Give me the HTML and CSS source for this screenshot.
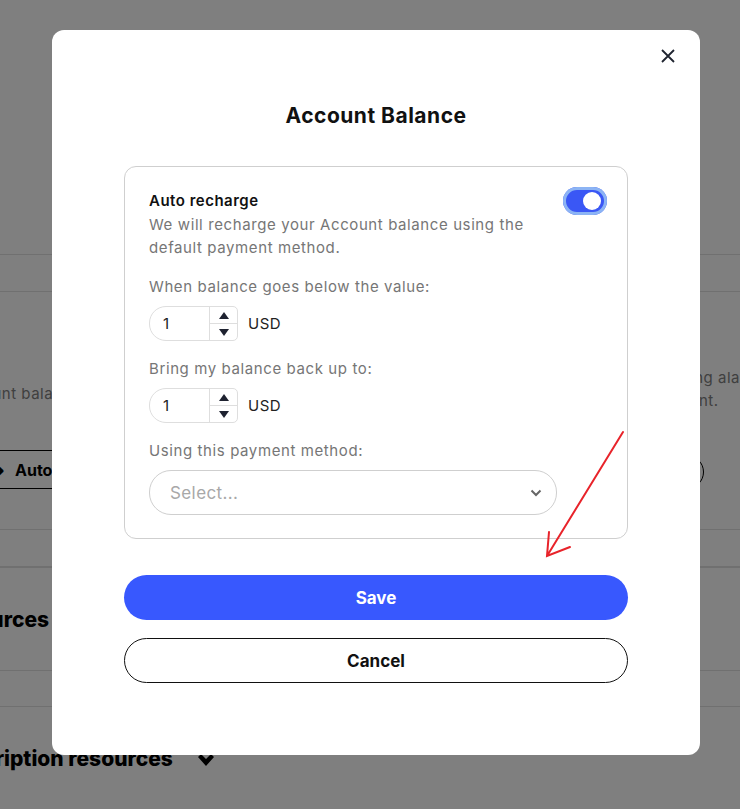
FILE: index.html
```html
<!DOCTYPE html>
<html lang="en">
<head>
    <meta charset="UTF-8">
    <meta name="viewport" content="width=device-width, initial-scale=1.0">
    <title>Account Balance</title>
    <link rel="stylesheet" href="styles.css">
</head>
<body>
    <!-- page behind the dialog -->
    <div class="page">
        <div class="row row-top"></div>
        <div class="row row-head"></div>
        <div class="about">
            <p class="about-left">Account balance</p>
            <p class="about-right"><span class="line">setting alarms</span><span class="line second">account.</span></p>
        </div>
        <div class="actions">
            <span class="auto-btn"><span class="auto-icon">&#10140;</span>Auto recharge</span>
            <span class="round-btn">Add funds</span>
        </div>
        <div class="row row-mid"></div>
        <h2 class="res-title">Resources</h2>
        <div class="row row-low"></div>
        <h2 class="res-title sub">Subscription resources
            <svg class="caret" width="18" height="14" viewBox="0 0 18 14"><path d="M1 4L4 1L9 6L14 1L17 4L9 13Z" fill="#000"/></svg>
        </h2>
    </div>

    <div class="overlay">
        <div class="modal">
            <button class="close" aria-label="Close">
                <svg width="16" height="16" viewBox="0 0 16 16"><path d="M2 2L14 14M14 2L2 14" stroke="#1f2430" stroke-width="1.8" fill="none"/></svg>
            </button>
            <h1 class="modal-title">Account Balance</h1>

            <div class="card">
                <div class="card-head">
                    <div class="head-text">
                        <div class="head-title">Auto recharge</div>
                        <p class="muted">We will recharge your Account balance using the default payment method.</p>
                    </div>
                    <span class="toggle"><span class="knob"></span></span>
                </div>

                <label class="field-label">When balance goes below the value:</label>
                <div class="amount">
                    <div class="num">
                        <span class="num-value">1</span>
                        <span class="spin">
                            <span class="spin-up"><svg width="10" height="7" viewBox="0 0 10 7"><path d="M5 0L10 7H0z" fill="#1e2230"/></svg></span>
                            <span class="spin-down"><svg width="10" height="7" viewBox="0 0 10 7"><path d="M0 0H10L5 7z" fill="#1e2230"/></svg></span>
                        </span>
                    </div>
                    <span class="currency">USD</span>
                </div>

                <label class="field-label">Bring my balance back up to:</label>
                <div class="amount">
                    <div class="num">
                        <span class="num-value">1</span>
                        <span class="spin">
                            <span class="spin-up"><svg width="10" height="7" viewBox="0 0 10 7"><path d="M5 0L10 7H0z" fill="#1e2230"/></svg></span>
                            <span class="spin-down"><svg width="10" height="7" viewBox="0 0 10 7"><path d="M0 0H10L5 7z" fill="#1e2230"/></svg></span>
                        </span>
                    </div>
                    <span class="currency">USD</span>
                </div>

                <label class="field-label">Using this payment method:</label>
                <div class="select">
                    <span class="placeholder">Select...</span>
                    <svg width="12" height="8" viewBox="0 0 12 8"><path d="M1.5 1.5L6 6L10.5 1.5" stroke="#666" stroke-width="2" fill="none"/></svg>
                </div>
            </div>

            <button class="btn btn-save">Save</button>
            <button class="btn btn-cancel">Cancel</button>
        </div>

        <!-- red annotation arrow -->
        <svg class="arrow" width="740" height="809" viewBox="0 0 740 809">
            <path d="M623 432L547 556M549 532L547 556L570 547" stroke="#e8232a" stroke-width="2" fill="none" stroke-linecap="round"/>
        </svg>
    </div>
</body>
</html>
```

FILE: styles.css
```css
* {
    box-sizing: border-box;
}
body {
    margin: 0;
    font-family: Inter, "Open Sans", Arial, sans-serif;
    background: #fff;
    color: #111;
    overflow: hidden;
}
.page {
    width: 740px;
    height: 809px;
    overflow: hidden;
}
.row {
    border-bottom: 1px solid #e0e0e0;
}
.row-top {
    height: 255px;
}
.row-head {
    height: 37px;
}
.about {
    display: flex;
    justify-content: space-between;
    height: 148px;
    font-size: 15px;
    color: #808080;
    line-height: 23px;
    letter-spacing: 0.5px;
}
.about-left {
    margin: 90px 0 0 -46px;
    white-space: nowrap;
}
.about-right {
    margin: 74px 0 0 0;
    width: 78px;
    white-space: nowrap;
}
.about-right .line {
    display: block;
}
.about-right .second {
    margin-left: -9px;
}
.actions {
    display: flex;
    justify-content: space-between;
    align-items: flex-start;
    height: 90px;
    border-bottom: 1px solid #e0e0e0;
    margin-bottom: 36px;
}
.auto-btn {
    display: flex;
    align-items: center;
    margin-left: -30px;
    margin-top: 10px;
    height: 39px;
    border: 1px solid #000;
    padding: 0 20px;
    font-weight: 700;
    font-size: 16px;
    color: #000;
    white-space: nowrap;
    width: 180px;
}
.auto-icon {
    width: 16px;
    margin-right: 8px;
}
.round-btn {
    margin-top: 15px;
    margin-right: 36px;
    height: 34px;
    line-height: 32px;
    border: 1px solid #000;
    border-radius: 17px;
    padding: 0 16px;
    width: 120px;
    color: #000;
    font-size: 15px;
}
.row-mid {
    border-top: 1px solid #e0e0e0;
    height: 1px;
    border-bottom: none;
}
.res-title {
    margin: 0 0 0 -61px;
    height: 104px;
    line-height: 104px;
    font-size: 21px;
    font-weight: 800;
    color: #000;
    border-top: 1px solid #e0e0e0;
    border-bottom: 1px solid #e0e0e0;
}
.row-low {
    height: 36px;
}
.res-title.sub {
    margin-left: -70px;
    height: 104px;
    line-height: 104px;
    border: none;
}
.caret {
    margin-left: 20px;
    vertical-align: -1px;
}

.overlay {
    position: fixed;
    inset: 0;
    background: rgba(0, 0, 0, 0.5);
}
.modal {
    position: absolute;
    left: 52px;
    top: 30px;
    width: 648px;
    height: 725px;
    background: #fff;
    border-radius: 12px;
    padding: 72px 72px 72px;
}
.close {
    position: absolute;
    top: 18px;
    right: 24px;
    width: 16px;
    height: 16px;
    padding: 0;
    border: none;
    background: none;
    cursor: pointer;
}
.modal-title {
    margin: 0 0 36px;
    text-align: center;
    font-size: 21px;
    line-height: 28px;
    font-weight: 700;
    letter-spacing: 0.5px;
    color: #111;
}
.card {
    border: 1px solid #cfcfcf;
    border-radius: 12px;
    padding: 24px 20px 23px 24px;
    margin-bottom: 36px;
}
.card-head {
    display: flex;
    justify-content: space-between;
    align-items: flex-start;
}
.head-text {
    width: 400px;
}
.head-title {
    font-size: 15px;
    line-height: 20px;
    font-weight: 600;
    letter-spacing: 0.5px;
    color: #111;
}
.muted {
    margin: 2px 0 0;
    font-size: 15px;
    line-height: 23px;
    letter-spacing: 0.6px;
    color: #767676;
}
.toggle {
    position: relative;
    width: 44px;
    height: 28px;
    margin-top: -4px;
    border-radius: 14px;
    background: #3a57f5;
    box-shadow: inset 0 0 0 3px #8cb4f4;
}
.knob {
    position: absolute;
    right: 6px;
    top: 5px;
    width: 18px;
    height: 18px;
    border-radius: 50%;
    background: #fff;
}
.field-label {
    display: block;
    margin-top: 16px;
    font-size: 15px;
    line-height: 23px;
    letter-spacing: 0.6px;
    color: #767676;
}
.amount {
    display: flex;
    align-items: center;
    gap: 10px;
    margin-top: 8px;
}
.num {
    display: flex;
    width: 89px;
    height: 35px;
    border: 1px solid #dedede;
    border-radius: 17px 5px 5px 17px;
}
.num-value {
    flex: 1;
    padding-left: 13px;
    line-height: 33px;
    font-size: 15px;
    color: #222;
}
.spin {
    display: flex;
    flex-direction: column;
    width: 28px;
    border-left: 1px solid #dedede;
}
.spin-up,
.spin-down {
    flex: 1;
    display: flex;
    align-items: center;
    justify-content: center;
}
.spin-up {
    border-bottom: 1px solid #dedede;
}
.currency {
    font-size: 15px;
    letter-spacing: 0.5px;
    color: #222;
}
.select {
    display: flex;
    align-items: center;
    justify-content: space-between;
    width: 408px;
    height: 45px;
    margin-top: 8px;
    padding: 0 14px 0 20px;
    border: 1px solid #cfcfcf;
    border-radius: 22px;
}
.placeholder {
    font-size: 17px;
    letter-spacing: 0.4px;
    color: #a8a8a8;
}
.btn {
    display: block;
    width: 100%;
    height: 45px;
    border-radius: 23px;
    font-family: inherit;
    font-size: 17px;
    font-weight: 700;
    cursor: pointer;
}
.btn-save {
    background: #3858fe;
    color: #fff;
    border: none;
    margin-bottom: 18px;
}
.btn-cancel {
    background: #fff;
    color: #111;
    border: 1px solid #111;
}
.arrow {
    position: absolute;
    left: 0;
    top: 0;
    pointer-events: none;
}
```
